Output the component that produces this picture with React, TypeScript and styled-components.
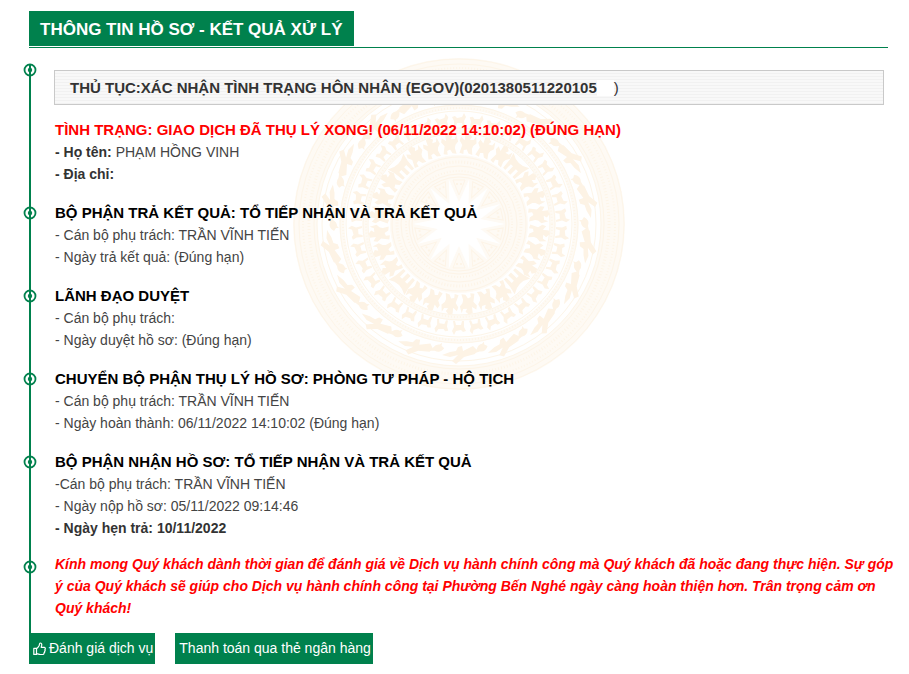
import React from "react";
import styled, { createGlobalStyle } from "styled-components";

const GREEN = "#00814d";

const GlobalStyle = createGlobalStyle`
  * { box-sizing: border-box; }
  body {
    margin: 0;
    background: #fff;
    color: #333;
    font: 14px/22px "Liberation Sans", Arial, sans-serif;
  }
`;

const Page = styled.main`
  padding: 11px 21px 10px 29px;
`;

const TitleBar = styled.header`
  display: flex;
  padding-bottom: 1px;
  border-bottom: 1px solid ${GREEN};
`;

const Title = styled.h1`
  margin: 0;
  padding: 2px 11px 0;
  background: ${GREEN};
  color: #fff;
  font-size: 17px;
  line-height: 33px;
`;

const Timeline = styled.div`
  position: relative;
  isolation: isolate;
  margin-top: 16px;
`;

const DrumSvg = styled.svg`
  position: absolute;
  z-index: -1;
  top: -8px;
  left: 50%;
  width: 336px;
  height: 336px;
  margin-left: -168px;
`;

const Steps = styled.ol`
  display: flex;
  flex-direction: column;
  gap: 16px;
  margin: 0;
  padding: 6px 4px 14px 24px;
  list-style: none;
  border-left: 2px solid ${GREEN};
`;

const Step = styled.li`
  position: relative;
`;

const Marker = styled.svg<{ $top: number }>`
  position: absolute;
  top: ${(p) => p.$top}px;
  left: -32px;
  width: 14px;
  height: 14px;
`;

const Procedure = styled.h2`
  display: flex;
  align-items: center;
  margin: 0 0 13px -1px;
  padding: 0 15px;
  border: 1px solid #c9c9c9;
  background: repeating-linear-gradient(#f8f8f8 0 2px, #f1f1f1 2px 3px);
  font-size: 15px;
  line-height: 33px;
`;

const Blank = styled.span`
  width: 17px;
  height: 16px;
  background: #fff;
`;

const Paren = styled.span`
  font-weight: 400;
`;

const StepTitle = styled.h3<{ $alert?: boolean }>`
  margin: 0;
  color: ${(p) => (p.$alert ? "#f00" : "#000")};
  font-size: 15px;
  line-height: 23px;
`;

const Line = styled.p<{ $strong?: boolean }>`
  margin: 0;
  color: ${(p) => (p.$strong ? "#333" : "#444")};
  font-weight: ${(p) => (p.$strong ? 700 : 400)};

  b {
    color: #333;
  }
`;

const Notice = styled.p`
  margin: -2px -12px 0 0;
  color: #f00;
  font-style: italic;
  font-weight: 700;
`;

const Actions = styled.div`
  display: flex;
  gap: 20px;
`;

const ActionButton = styled.button`
  display: flex;
  align-items: center;
  gap: 3px;
  padding: 0 2px 0 4px;
  border: 0;
  background: ${GREEN};
  color: #fff;
  font: 14px/31px "Liberation Sans", Arial, sans-serif;
  cursor: pointer;
`;

const ThumbIcon = () => (
  <svg width="13" height="14" viewBox="0 0 13 14" fill="none" stroke="#fff" strokeWidth="1.2" strokeLinejoin="round" aria-hidden="true">
    <path d="M.8 6.4h2.700v6H.8z" />
    <path d="M3.500 6.600C5 5.900 5.800 4.300 6.200 3.500 6.500 2.600 6.300 1 7.200 1c1.300 0 1.700 1.100 1.500 2.200L8.200 5.400h2.900c1.200 0 1.600 1.300.8 2 .5.700.3 1.500-.3 1.900.3.700 0 1.300-.6 1.600.1 1-.5 1.600-1.500 1.600H7.300c-1.500 0-2.200-.8-3.800-.8" />
  </svg>
);

const StepMarker = ({ top }: { top: number }) => (
  <Marker $top={top} viewBox="0 0 14 14" aria-hidden="true">
    <circle cx="7" cy="7" r="5.500" fill="#fff" stroke={GREEN} strokeWidth="1.800" />
    <path d="M7 1v12" stroke={GREEN} strokeWidth="2" />
    <circle cx="7" cy="7" r="2.200" fill={GREEN} />
  </Marker>
);

const around = (count: number, offset = 0) =>
  Array.from({ length: count }, (_, i) => (i * 360) / count + offset);

const starPoints = around(28)
  .map((deg, i) => {
    const r = i % 2 ? 46 : 22;
    const a = (deg * Math.PI) / 180;
    return `${(r * Math.sin(a)).toFixed(1)},${(-r * Math.cos(a)).toFixed(1)}`;
  })
  .join(" ");

const Drum = () => (
  <DrumSvg viewBox="-168 -168 336 336" aria-hidden="true">
    <defs>
      <g id="bird">
        <path d="M-18 3-16-1-5-4 3-11 7-8 1-2 9-4 17-2 9 1 3 2 1 6-3 7-4 2-14 7z" />
      </g>
      <g id="smallBird">
        <path d="M-7 1Q-4-5 2-3L7-4 4 0Q2 4-2 4L-4 6-4 3z" />
      </g>
      <g id="deer">
        <path d="M-7-3-4-4-2-2 3-3 5-7 7-3 5 1 6 7 4 7 3 3-2 3-3 7-5 7-5 1z" />
      </g>
      <g id="dancer">
        <path d="M-3-10 1-11 4-8 2-5 6-5 8-9 9-2 6 1 5 4 6 10 2 9 0 5-3 6-3 10-7 9-5 1-8-3-7-7-3-4z" />
      </g>
      <g id="house">
        <path d="M-11-9Q0-2 11-9L9-1 8 9 5 9 5 1 2 1 2 9-2 9-2 1-5 1-5 9-8 9-9-1z" />
      </g>
    </defs>
    <g fill="none" stroke="#fefaf4">
      <circle r="154" strokeWidth="24" />
      <circle r="117" strokeWidth="5" />
      <circle r="94" strokeWidth="5" />
    </g>
    <g fill="none" stroke="#fdf5e8" strokeWidth="1">
      <circle r="165" />
      <circle r="160" />
      <circle r="156" strokeWidth="2" strokeDasharray="1 2" />
      <circle r="150" strokeWidth="3" strokeDasharray="1 2" />
      <circle r="145" />
      <circle r="142" />
      <circle r="137" />
      <circle r="119" />
      <circle r="116" strokeWidth="2" strokeDasharray="1 2" />
      <circle r="113" />
      <circle r="96" />
      <circle r="93" strokeWidth="2" strokeDasharray="1 2" />
      <circle r="91" />
    </g>
    <g fill="#fdf3e5">
      {around(18).map((a) => (
        <use key={a} href="#bird" transform={`rotate(${a}) translate(0 -129)`} />
      ))}
      {around(18, 10).map((a) => (
        <use key={a} href="#smallBird" transform={`rotate(${a}) translate(0 -126)`} />
      ))}
      {around(38).map((a) => (
        <use key={a} href="#deer" transform={`rotate(${a}) translate(0 -104)`} />
      ))}
      {around(28, 6).map((a, i) => (
        <use
          key={a}
          href={i % 7 === 3 ? "#house" : "#dancer"}
          transform={`rotate(${a}) translate(0 -80)`}
        />
      ))}
    </g>
    <circle r="69" fill="#fefaf4" />
    <g fill="none" stroke="#fdf4e7">
      <circle r="67" />
      <circle r="62" strokeWidth="3" strokeDasharray="1 2" />
      <circle r="58" />
      <circle r="53" strokeWidth="2" strokeDasharray="1 2" />
      <circle r="50" />
      <circle r="47" />
      {around(14).map((a) => (
        <g key={a} transform={`rotate(${a})`}>
          <path d="M0-29-6-44 6-44z" />
          <path d="M-2-39v-2M2-39v-2" strokeWidth="2" />
        </g>
      ))}
    </g>
    <polygon points={starPoints} fill="#fff" />
  </DrumSvg>
);

const steps = [
  {
    title: "BỘ PHẬN TRẢ KẾT QUẢ: TỔ TIẾP NHẬN VÀ TRẢ KẾT QUẢ",
    lines: ["- Cán bộ phụ trách: TRẦN VĨNH TIẾN", "- Ngày trả kết quả: (Đúng hạn)"],
  },
  {
    title: "LÃNH ĐẠO DUYỆT",
    lines: ["- Cán bộ phụ trách:", "- Ngày duyệt hồ sơ: (Đúng hạn)"],
  },
  {
    title: "CHUYỂN BỘ PHẬN THỤ LÝ HỒ SƠ: PHÒNG TƯ PHÁP - HỘ TỊCH",
    lines: ["- Cán bộ phụ trách: TRẦN VĨNH TIẾN", "- Ngày hoàn thành: 06/11/2022 14:10:02 (Đúng hạn)"],
  },
  {
    title: "BỘ PHẬN NHẬN HỒ SƠ: TỔ TIẾP NHẬN VÀ TRẢ KẾT QUẢ",
    lines: ["-Cán bộ phụ trách: TRẦN VĨNH TIẾN", "- Ngày nộp hồ sơ: 05/11/2022 09:14:46"],
    due: "- Ngày hẹn trả: 10/11/2022",
  },
];

export default function App() {
  return (
    <>
      <GlobalStyle />
      <Page>
        <TitleBar>
          <Title>THÔNG TIN HỒ SƠ - KẾT QUẢ XỬ LÝ</Title>
        </TitleBar>
        <Timeline>
          <Drum />
          <Steps>
            <Step>
              <StepMarker top={-7} />
              <Procedure>
                THỦ TỤC:XÁC NHẬN TÌNH TRẠNG HÔN NHÂN (EGOV)(0201380511220105
                <Blank />
                <Paren>)</Paren>
              </Procedure>
              <StepTitle $alert>TÌNH TRẠNG: GIAO DỊCH ĐÃ THỤ LÝ XONG! (06/11/2022 14:10:02) (ĐÚNG HẠN)</StepTitle>
              <Line>
                <b>- Họ tên:</b> PHẠM HỒNG VINH
              </Line>
              <Line>
                <b>- Địa chỉ:</b>
              </Line>
            </Step>
            {steps.map((step) => (
              <Step key={step.title}>
                <StepMarker top={5} />
                <StepTitle>{step.title}</StepTitle>
                {step.lines.map((line) => (
                  <Line key={line}>{line}</Line>
                ))}
                {step.due && <Line $strong>{step.due}</Line>}
              </Step>
            ))}
            <Step>
              <StepMarker top={5} />
              <Notice>
                Kính mong Quý khách dành thời gian để đánh giá về Dịch vụ hành chính công mà Quý khách đã hoặc đang
                thực hiện. Sự góp ý của Quý khách sẽ giúp cho Dịch vụ hành chính công tại Phường Bến Nghé ngày càng
                hoàn thiện hơn. Trân trọng cảm ơn Quý khách!
              </Notice>
            </Step>
          </Steps>
          <Actions>
            <ActionButton type="button">
              <ThumbIcon />
              Đánh giá dịch vụ
            </ActionButton>
            <ActionButton type="button">Thanh toán qua thẻ ngân hàng</ActionButton>
          </Actions>
        </Timeline>
      </Page>
    </>
  );
}
